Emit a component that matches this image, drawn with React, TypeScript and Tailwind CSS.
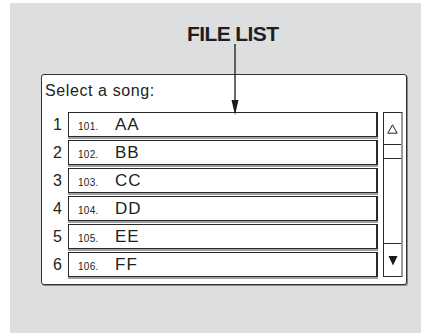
const songs = [
  { n: 1, id: "101.", name: "AA" },
  { n: 2, id: "102.", name: "BB" },
  { n: 3, id: "103.", name: "CC" },
  { n: 4, id: "104.", name: "DD" },
  { n: 5, id: "105.", name: "EE" },
  { n: 6, id: "106.", name: "FF" },
];

const App = () => {
  return (
    <div className="w-[421px] h-[333px] bg-white pl-[10px] pt-[3px] flex font-['Liberation_Sans',Arial,sans-serif] text-[#222]">
      <div className="relative flex-1 bg-[#dddee0] flex flex-col pt-[20px]">
        {/* title */}
        <h2 className="ml-[177px] self-start text-[21px] leading-none font-bold tracking-[-0.6px] text-[#1e1e1e]">
          FILE LIST
        </h2>

        {/* list panel */}
        <div className="ml-[31px] mt-[30px] w-[366px] h-[211px] bg-white border border-[#333] rounded-[3px] shadow-[1px_1px_0_#8a8a8a] flex flex-col pt-[8px]">
          <p className="pl-[3px] text-[16px] leading-[16px] tracking-[0.6px]">Select a song:</p>

          <div className="mt-[13px] flex">
            {/* rows */}
            <div className="flex flex-col gap-[3px]">
              {songs.map((s) => (
                <div key={s.n} className="flex items-center">
                  <span className="w-[26px] pr-[6px] text-right text-[16px] leading-none">{s.n}</span>
                  <div className="w-[310px] h-[25px] border border-[#2a2a2a] border-r-2 shadow-[0_2px_0_#a0a0a0] flex items-baseline pl-[9px] pt-[3px]">
                    <span className="w-[37px] text-[10px] tracking-[0.3px]">{s.id}</span>
                    <span className="text-[17px] leading-none tracking-[1px]">{s.name}</span>
                  </div>
                </div>
              ))}
            </div>

            {/* scrollbar */}
            <div className="ml-[5px] w-[20px] h-[165px] border border-[#2a2a2a] border-r-2 border-r-[#9a9a9a] flex flex-col">
              <div className="h-[32px] border-b border-[#2a2a2a] flex items-center justify-center">
                <svg width="11" height="10" viewBox="0 0 11 10">
                  <path d="M5.5 0.8 L10.2 9.2 L0.8 9.2 Z" fill="none" stroke="#222" strokeWidth="1" />
                </svg>
              </div>
              <div className="h-[14px] border-b border-[#2a2a2a]" />
              <div className="flex-1" />
              <div className="h-[33px] border-t border-[#2a2a2a] flex items-center justify-center">
                <svg width="10" height="11" viewBox="0 0 10 11">
                  <path d="M0.5 1 L9.5 1 L5 10.5 Z" fill="#1a1a1a" />
                </svg>
              </div>
            </div>
          </div>
        </div>

        {/* pointer arrow over the panel */}
        <svg className="absolute left-[220px] top-[41px]" width="10" height="72" viewBox="0 0 10 72">
          <line x1="5" y1="0" x2="5" y2="58" stroke="#1a1a1a" strokeWidth="1.3" />
          <path d="M1.5 56 L8.5 56 L5 71 Z" fill="#1a1a1a" />
        </svg>
      </div>
    </div>
  );
};

export default App;
